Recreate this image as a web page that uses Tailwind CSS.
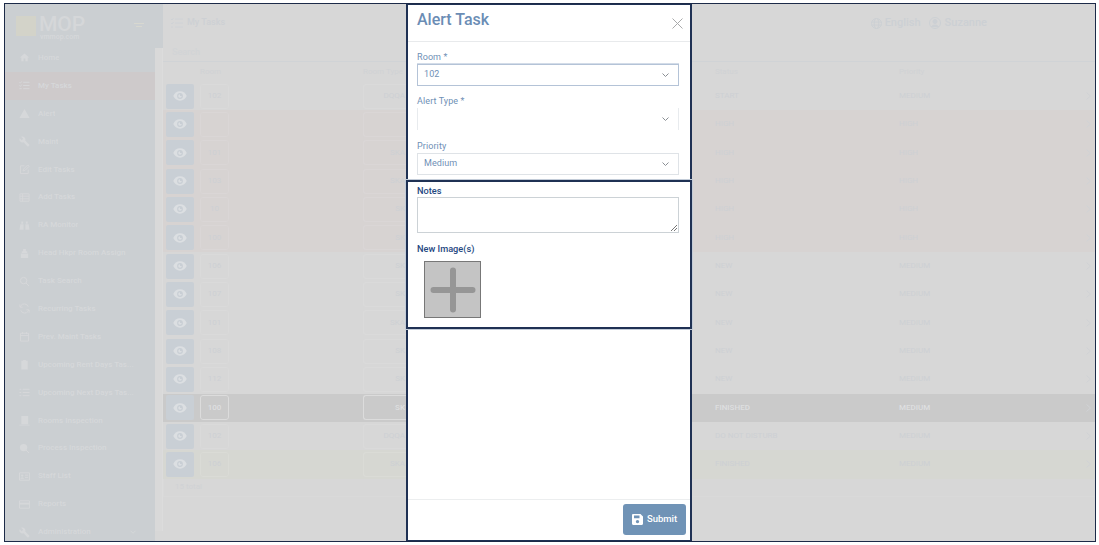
<!DOCTYPE html>
<html lang="en">
<head>
<meta charset="UTF-8">
<title>Alert Task</title>
<script src="https://cdn.jsdelivr.net/npm/@tailwindcss/browser@4"></script>
</head>
<body class="bg-white font-['Roboto',sans-serif] overflow-hidden">
<div class="relative mt-[3px] ml-[4px] w-[1092px] h-[539px] border border-[#1c2a48] flex overflow-hidden bg-[#d7d7d7]">

  <!-- Sidebar (dimmed) -->
  <aside class="w-[150px] shrink-0 bg-[#cbcfd2] text-[#d6d8da] text-[8px] font-medium">
    <div class="h-[40px] relative">
      <div class="absolute left-[11px] top-[12px] w-[20px] h-[20px] bg-[#d3d3c9]"></div>
      <div class="absolute left-[34px] top-[13px] text-[21px] font-medium leading-[15px] text-[#d5d7d9]">MOP</div>
      <div class="absolute left-[35px] top-[29px] text-[7px] leading-[8px]">vmmop.com</div>
      <div class="absolute left-[129px] top-[19px] w-[10px] h-[1px] bg-[#d8d8d0]"></div>
      <div class="absolute left-[131px] top-[22px] w-[6px] h-[1px] bg-[#d8d8d0]"></div>
    </div>
    <nav id="side-nav" class="flex flex-col"></nav>
  </aside>

  <!-- Strip between sidebar and page -->
  <div class="w-[8px] shrink-0 flex flex-col">
    <div class="h-[44px] bg-[#cbcfd2]"></div>
    <div class="flex-1 bg-[#d9d9d9] border-r border-[#dcdcdc] mb-[10px]"></div>
  </div>

  <!-- Page (dimmed) -->
  <main class="flex-1 min-w-0 rounded-tl-[8px] bg-[#d7d7d7] text-[#cdd0d4] text-[8px]">
    <div class="h-[38px] flex items-center justify-between">
      <div class="flex items-center gap-[4px] pl-[8px] text-[9px] font-medium">
        <svg class="w-[12px] h-[10px]" viewBox="0 0 12 10" fill="none" stroke="#cfd2d6"><path d="M4 1h8M4 5h8M4 9h8M0 1l1 1 1.500-2M0 5l1 1 1.500-2M0 9h2"/></svg><span>My Tasks</span>
      </div>
      <div class="flex items-center gap-[8px] pr-[108px] text-[11px] font-medium text-[#ccd0d4]">
        <span class="flex items-center gap-[3px]">
          <svg class="w-[11px] h-[11px]" viewBox="0 0 11 11" fill="none" stroke="#ccd0d4"><circle cx="5.500" cy="5.500" r="5"/><ellipse cx="5.500" cy="5.500" rx="2.200" ry="5"/><path d="M.5 4h10M.5 7h10"/></svg>English</span>
        <span class="flex items-center gap-[4px]">
          <svg class="w-[12px] h-[12px]" viewBox="0 0 12 12" fill="none" stroke="#ccd0d4"><circle cx="6" cy="6" r="5.500"/><circle cx="6" cy="4.500" r="2" fill="#ccd0d4"/><path d="M2.500 10c1-2.500 6-2.500 7 0" fill="#ccd0d4"/></svg>Suzanne</span>
      </div>
    </div>
    <div class="h-[20px] pl-[9px] border-b border-[#d0d3d6] text-[9px] font-medium leading-[20px] text-[#d2d4d6]">Search</div>
    <div class="h-[20px] grid grid-cols-[163px_352px_184px_184px] pl-[37px] items-center text-[#d0d2d5]">
      <span>Room</span><span>Room Type</span><span>Status</span><span>Priority</span>
    </div>
    <div id="task-rows" class="flex flex-col"></div>
    <div class="h-[18px] pl-[11px] flex items-center text-[#d0d2d5] border-b border-l border-[#d9d9d9]">15 total</div>
  </main>

  <!-- Modal -->
  <section class="absolute left-[401px] top-[-1px] w-[286px] h-[539px] border-2 border-[#1f3154] bg-white flex flex-col">
    <header class="h-[37px] shrink-0 border-b border-[#e8eaec] flex justify-between pl-[9px] pr-[7px]">
      <h2 class="text-[16px] font-medium leading-[30px] text-[#6b8db5]">Alert Task</h2>
      <svg class="w-[11px] h-[11px] mt-[13px]" viewBox="0 0 11 11" fill="none" stroke="#a9aaab" stroke-width="1"><path d="M.5.5l10 10M10.5.5l-10 10"/></svg>
    </header>

    <div class="h-[138px] shrink-0 pl-[9px] pr-[11px] pt-[9px] text-[9px] tracking-[.1px] text-[#6f90b6] flex flex-col">
      <label class="leading-[13px]">Room *</label>
      <div class="h-[22px] border border-[#b4c3d7] shadow-[0_-1px_0_#d3dce8] flex items-center justify-between pl-[6px] pr-[9px]">
        <span>102</span>
        <svg class="w-[7px] h-[4px]" viewBox="0 0 7 4" fill="none" stroke="#8a8f94"><path d="M.5.5l3 3 3-3"/></svg>
      </div>
      <label class="mt-[9px] leading-[13px]">Alert Type *</label>
      <div class="h-[22px] border-x border-[#e8ebee] flex items-center justify-end pr-[9px]">
        <svg class="w-[7px] h-[4px]" viewBox="0 0 7 4" fill="none" stroke="#8a8f94"><path d="M.5.5l3 3 3-3"/></svg>
      </div>
      <label class="mt-[10px] leading-[13px]">Priority</label>
      <div class="h-[22px] border border-[#dfe3e7] flex items-center justify-between pl-[6px] pr-[9px]">
        <span>Medium</span>
        <svg class="w-[7px] h-[4px]" viewBox="0 0 7 4" fill="none" stroke="#8a8f94"><path d="M.5.5l3 3 3-3"/></svg>
      </div>
    </div>

    <div class="h-[149px] shrink-0 mx-[-2px] border-2 border-[#1f3154] shadow-[0_0_0_1px_#c3ccd8] pl-[9px] pr-[11px] pt-[3px] text-[9.2px] font-medium text-[#24477f]">
      <label class="block leading-[12px]">Notes</label>
      <div class="relative h-[36px] border border-[#ccd2d6]">
        <svg class="absolute right-[1px] bottom-[1px] w-[6px] h-[6px]" viewBox="0 0 6 6" stroke="#777" fill="none"><path d="M0 6l6-6M3 6l3-3"/></svg>
      </div>
      <label class="block mt-[10px] leading-[12px]">New Image(s)</label>
      <div class="ml-[7px] mt-[6px] w-[57px] h-[57px] bg-[#c4c4c4] border border-[#777] flex items-center justify-center">
        <svg class="w-[46px] h-[46px]" viewBox="0 0 46 46" fill="none" stroke="#969696" stroke-width="6" stroke-linecap="round"><path d="M23 3.500v39M3.500 23h39"/></svg>
      </div>
    </div>

    <div class="flex-1"></div>

    <footer class="h-[41px] shrink-0 border-t border-[#eceeef] flex justify-end pt-[4px] pr-[4px]">
      <button class="w-[63px] h-[31px] rounded-[3px] bg-[#7093b6] text-white text-[9.5px] font-medium flex items-center justify-center gap-[4px]">
        <svg class="w-[11px] h-[11px]" viewBox="0 0 11 11" fill="#fff"><path fill-rule="evenodd" d="M1.200 0h7.300L11 2.500v7.300c0 .7-.5 1.200-1.200 1.200H1.200C.5 11 0 10.500 0 9.800V1.200C0 .5.500 0 1.200 0zM2 1.500v2.700h5.500V1.500H2zM5.500 9.300a1.700 1.700 0 1 0 0-3.400 1.700 1.700 0 0 0 0 3.400z"/></svg>
        Submit
      </button>
    </footer>
  </section>
</div>

<script>
  // Sidebar entries: label and icon markup
  const solid = 'fill="#d6d8da"';
  const line = 'fill="none" stroke="#d6d8da" stroke-width="2"';
  const wrench = 'M22.700 19l-9.100-9.100c.9-2.300.4-5-1.500-6.900-2-2-5-2.400-7.400-1.300L9 6 6 9 1.600 4.700C.4 7.100.9 10.100 2.900 12.100c1.900 1.900 4.600 2.400 6.900 1.500l9.100 9.100c.4.4 1 .4 1.400 0l2.300-2.300c.5-.4.5-1.100.1-1.400z';
  const navItems = [
    ['Home', `<path ${solid} d="M10 20v-6h4v6h5v-8h3L12 3 2 12h3v8z"/>`],
    ['My Tasks', `<path ${line} d="M9 5h14M9 12h14M9 19h14M1 5l2 2 3-4M1 12l2 2 3-4M1 19h5"/>`],
    ['Alert', `<path ${solid} d="M1 22h22L12 2z"/>`],
    ['Maint', `<path ${solid} d="${wrench}"/>`],
    ['Edit Tasks', `<path ${line} d="M12 4H3v17h17v-9M9 15l1-4L19 2l3 3-9 9z"/>`],
    ['Add Tasks', `<path ${line} d="M2 4h20v16H2zM2 9h20M2 15h20M8 4v16"/>`],
    ['RA Monitor', `<path ${solid} d="M3 9h7v12H1zM14 9h7l2 12h-9zM5 3h4v5H5zM15 3h4v5h-4z"/>`],
    ['Head Hkpr Room Assign', `<path ${solid} d="M9 2h6v5h3v4H6V7h3zM4 12h16v10H4z"/>`],
    ['Task Search', `<circle ${line} cx="10" cy="10" r="7"/><path ${line} d="M15 15l7 7"/>`],
    ['Recurring Tasks', `<path ${line} d="M20 8a9 9 0 0 0-16-2L2 9M4 16a9 9 0 0 0 16 2l2-3M2 3v6h6M22 21v-6h-6"/>`],
    ['Prev. Maint Tasks', `<path ${line} d="M3 5h18v17H3zM3 10h18M8 2v5M16 2v5"/>`],
    ['Upcoming Rent Days Tas...', `<path ${solid} d="M9 2h6v2h4v19H5V4h4z"/>`],
    ['Upcoming Next Days Tas...', `<path ${line} d="M8 5h15M8 12h15M8 19h15M1 5h4M1 12h4M1 19h4"/>`],
    ['Rooms Inspection', `<path ${solid} d="M5 2h15v18H5zM1 21h22v2H1z"/>`],
    ['Process Inspection', `<circle ${solid} cx="10" cy="10" r="8"/><path ${line} d="M15 15l7 7"/>`],
    ['Staff List', `<path ${line} d="M1 4h22v16H1zM13 9h7M13 14h7"/><circle ${solid} cx="7" cy="10" r="2.500"/><path ${solid} d="M3 17c1-4 7-4 8 0z"/>`],
    ['Reports', `<path ${line} d="M1 4h22v16H1z"/><path ${solid} d="M1 8h22v4H1z"/>`],
    ['Administration', `<path ${solid} d="${wrench}"/>`],
  ];

  document.getElementById('side-nav').innerHTML = navItems.map(([label, icon]) => `
    <div class="h-[27.9px] flex items-center gap-[8px] pl-[14px] pr-[12px] ${label === 'My Tasks' ? 'bg-[#cecacb]' : ''}">
      <svg class="w-[11px] h-[11px] shrink-0" viewBox="0 0 24 24">${icon}</svg>
      <span class="truncate">${label}</span>
      ${label === 'Administration' ? '<svg class="w-[6px] h-[4px] ml-auto mr-[7px]" viewBox="0 0 7 4" fill="none" stroke="#d6d8da"><path d="M.5.5l3 3 3-3"/></svg>' : ''}
    </div>`).join('');

  // Task rows: room, room type, status, priority, row colour, box border colour
  const pink = 'bg-[#d7d3d2]';
  const pinkBox = 'border-[#dad6d6]';
  const greyBox = 'border-[#dadada]';
  const taskRows = [
    ['102', 'DQQA', 'START', 'MEDIUM', '', greyBox],
    ['', '', 'HIGH', 'HIGH', pink, pinkBox],
    ['101', 'SKA', 'HIGH', 'HIGH', pink, pinkBox],
    ['103', 'SKA', 'HIGH', 'HIGH', pink, pinkBox],
    ['10', 'SK', 'HIGH', 'HIGH', pink, pinkBox],
    ['100', 'SK', 'HIGH', 'HIGH', pink, pinkBox],
    ['106', 'SK', 'NEW', 'MEDIUM', '', greyBox],
    ['107', 'SK', 'NEW', 'MEDIUM', '', greyBox],
    ['101', 'SKA', 'NEW', 'MEDIUM', '', greyBox],
    ['108', 'SK', 'NEW', 'MEDIUM', '', greyBox],
    ['112', 'SK', 'NEW', 'MEDIUM', '', greyBox],
    ['100', 'SK', 'FINISHED', 'MEDIUM', 'bg-[#cacaca] text-[#dedfe0] font-medium', 'border-[#dcdcdc]'],
    ['102', 'DQQA', 'DO NOT DISTURB', 'MEDIUM', '', greyBox],
    ['106', 'SKA', 'FINISHED', 'MEDIUM', 'bg-[#d6d7d2]', 'border-[#dadbd6]'],
  ];

  document.getElementById('task-rows').innerHTML = taskRows.map(([room, type, status, priority, rowClass, boxClass]) => `
    <div class="h-[28.33px] flex items-center pl-[3px] ${rowClass}">
      <span class="w-[28px] h-[25px] rounded-[2px] bg-[#c9cfd5] flex items-center justify-center">
        <svg class="w-[14px] h-[14px]" viewBox="0 0 24 24"><path fill="#dcdfe2" d="M12 4C6.500 4 2.500 7.500 .5 12c2 4.500 6 8 11.500 8s9.500-3.500 11.500-8c-2-4.500-6-8-11.500-8z"/><circle cx="12" cy="12" r="5" fill="#c9cfd5"/><path fill="#dcdfe2" d="M12 9v3h3a3 3 0 1 1-3-3z"/></svg>
      </span>
      <span class="ml-[6px] w-[29px] h-[25px] rounded-[3px] border ${boxClass} flex items-center justify-center">${room}</span>
      <span class="ml-[134px] w-[45px] h-[25px] rounded-l-[3px] border border-r-0 ${boxClass} flex items-center justify-end pr-[3px]">${type}</span>
      <span class="ml-[307px] w-[184px]">${status}</span>
      <span class="w-[100px]">${priority}</span>
      <svg class="ml-auto mr-[4px] w-[5px] h-[8px]" viewBox="0 0 5 8" fill="none" stroke="#d0d2d5"><path d="M.5.5L4.500 4 .5 7.500"/></svg>
    </div>`).join('');
</script>
</body>
</html>
